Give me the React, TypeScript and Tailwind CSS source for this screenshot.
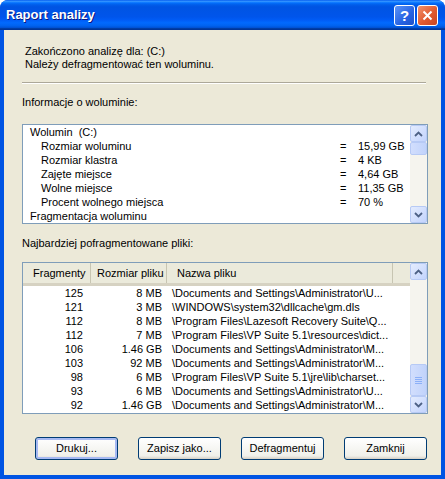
import React from 'react';

const volumeRows: { label: string; value?: string; indent?: boolean }[] = [
  { label: 'Wolumin\u00a0\u00a0(C:)' },
  { label: 'Rozmiar woluminu', value: '15,99 GB', indent: true },
  { label: 'Rozmiar klastra', value: '4 KB', indent: true },
  { label: 'Zajęte miejsce', value: '4,64 GB', indent: true },
  { label: 'Wolne miejsce', value: '11,35 GB', indent: true },
  { label: 'Procent wolnego miejsca', value: '70 %', indent: true },
  { label: 'Fragmentacja woluminu' },
];

const files = [
  ['125', '8 MB', '\\Documents and Settings\\Administrator\\U...'],
  ['121', '3 MB', '\\WINDOWS\\system32\\dllcache\\gm.dls'],
  ['112', '8 MB', '\\Program Files\\Lazesoft Recovery Suite\\Q...'],
  ['112', '7 MB', '\\Program Files\\VP Suite 5.1\\resources\\dict...'],
  ['106', '1.46 GB', '\\Documents and Settings\\Administrator\\M...'],
  ['103', '92 MB', '\\Documents and Settings\\Administrator\\M...'],
  ['98', '6 MB', '\\Program Files\\VP Suite 5.1\\jre\\lib\\charset...'],
  ['93', '6 MB', '\\Documents and Settings\\Administrator\\U...'],
  ['92', '1.46 GB', '\\Documents and Settings\\Administrator\\M...'],
];

function Arrow({ up }: { up?: boolean }) {
  return (
    <svg width="9" height="6" viewBox="0 0 9 6">
      <path
        d={up ? 'M1 5 L4.5 1.5 L8 5' : 'M1 1 L4.5 4.5 L8 1'}
        stroke="#4D6185"
        strokeWidth="1.8"
        fill="none"
      />
    </svg>
  );
}

function ScrollBtn({ up }: { up?: boolean }) {
  return (
    <div className="h-[17px] w-[17px] shrink-0 rounded-[2px] border border-[#B7CAF5] bg-[linear-gradient(135deg,#E4ECFE,#C3D4FD)] flex items-center justify-center">
      <Arrow up={up} />
    </div>
  );
}

function Thumb({ h, grip }: { h: number; grip?: boolean }) {
  return (
    <div
      className="w-[17px] shrink-0 rounded-[2px] border border-[#B7CAF5] bg-[linear-gradient(90deg,#D2DEFD,#C1D3FB)] flex flex-col items-center justify-center gap-[1px]"
      style={{ height: h }}
    >
      {grip &&
        [0, 1, 2, 3].map((i) => (
          <div key={i} className="h-[1px] w-[7px] bg-[#EEF3FE] border-b border-[#8CB0F8]" />
        ))}
    </div>
  );
}

export default function App() {
  return (
    <div className="w-[445px] h-[479px] bg-white font-['Liberation_Sans',Arial,sans-serif] text-[11px] text-black">
      <div className="w-[445px] h-[479px] rounded-t-[8px] overflow-hidden bg-[#0054E3] flex flex-col">
        {/* title bar */}
        <div className="h-[30px] shrink-0 flex items-center pl-[6px] pr-[7px] bg-[linear-gradient(180deg,#0058EE_0%,#3593FF_4%,#288EFF_6%,#127DFF_8%,#036FFC_10%,#0262EE_14%,#0057E5_20%,#0054E3_24%,#0055EB_56%,#005BF5_66%,#026AFE_76%,#0062EF_86%,#0052D6_92%,#0040AB_94%,#003092_100%)]">
          <span className="flex-1 text-white font-bold text-[13px] [text-shadow:1px_1px_#0A1883]">
            Raport analizy
          </span>
          <div className="flex gap-[2px] mt-[1px]">
            <div className="h-[21px] w-[21px] rounded-[3px] border border-white bg-[linear-gradient(135deg,#5C93F7,#2663E3_60%,#1E50C8)] flex items-center justify-center text-white font-bold text-[15px] leading-none">
              ?
            </div>
            <div className="h-[21px] w-[21px] rounded-[3px] border border-white bg-[linear-gradient(135deg,#F1926C,#E15A30_55%,#C84522)] flex items-center justify-center">
              <svg width="11" height="11" viewBox="0 0 11 11">
                <path d="M1.5 1.5 L9.5 9.5 M9.5 1.5 L1.5 9.5" stroke="white" strokeWidth="2" />
              </svg>
            </div>
          </div>
        </div>

        {/* client */}
        <div className="flex-1 mx-[4px] mb-[4px] bg-[#ECE9D8] pt-[15px] pb-[15px] flex flex-col leading-[13px]">
          <div className="pl-[21px]">
            <div>Zakończono analizę dla: (C:)</div>
            <div>Należy defragmentować ten woluminu.</div>
          </div>
          <div className="mt-[11px] ml-[18px] w-[404px] h-[2px] border-t border-[#ACA899] border-b border-b-white" />
          <div className="mt-[12px] pl-[18px]">Informacje o woluminie:</div>

          {/* volume box */}
          <div className="mt-[15px] ml-[18px] w-[406px] h-[100px] border border-[#7F9DB9] bg-white flex">
            <div className="flex-1 flex flex-col">
              {volumeRows.map((r) => (
                <div key={r.label} className="h-[14px] flex items-center whitespace-nowrap">
                  <span className={r.indent ? 'pl-[18px] w-[317px]' : 'pl-[7px] w-[317px]'}>{r.label}</span>
                  {r.value && (
                    <>
                      <span className="w-[18px]">=</span>
                      <span>{r.value}</span>
                    </>
                  )}
                </div>
              ))}
            </div>
            <div className="w-[17px] bg-[#F5F4EE] flex flex-col">
              <ScrollBtn up />
              <Thumb h={13} />
              <div className="flex-1" />
              <ScrollBtn />
            </div>
          </div>

          <div className="mt-[13px] pl-[18px]">Najbardziej pofragmentowane pliki:</div>

          {/* files box */}
          <div className="mt-[12px] ml-[18px] w-[406px] h-[152px] border border-[#7F9DB9] bg-white flex">
            <div className="flex-1 flex flex-col min-w-0">
              <div className="h-[23px] shrink-0 flex bg-[#EBEADB] border-b-[3px] border-[#D6D2C2] whitespace-nowrap">
                <div className="w-[68px] shrink-0 pl-[10px] flex items-center border-r border-[#C7C5B2]">Fragmenty</div>
                <div className="w-[76px] shrink-0 pl-[6px] flex items-center overflow-hidden border-r border-[#C7C5B2]">Rozmiar pliku</div>
                <div className="w-[226px] shrink-0 pl-[10px] flex items-center border-r border-[#C7C5B2]">Nazwa pliku</div>
                <div className="flex-1" />
              </div>
              {files.map((f, i) => (
                <div key={i} className="h-[14px] flex items-center whitespace-nowrap">
                  <span className="w-[68px] shrink-0 pr-[8px] text-right">{f[0]}</span>
                  <span className="w-[76px] shrink-0 pr-[5px] text-right">{f[1]}</span>
                  <span className="pl-[5px] overflow-hidden">{f[2]}</span>
                </div>
              ))}
            </div>
            <div className="w-[17px] bg-[#F5F4EE] flex flex-col">
              <ScrollBtn up />
              <div className="flex-1" />
              <Thumb h={32} grip />
              <ScrollBtn />
            </div>
          </div>

          {/* buttons */}
          <div className="mt-[23px] pl-[31px] flex gap-[20px]">
            {['Drukuj...', 'Zapisz jako...', 'Defragmentuj', 'Zamknij'].map((b, i) => (
              <div
                key={b}
                className={
                  'w-[83px] h-[23px] rounded-[3px] border border-[#003C74] bg-[linear-gradient(180deg,#FFFFFF,#F0F0EA_85%,#D6D0C5)] flex items-center justify-center ' +
                  (i === 0 ? 'shadow-[inset_0_0_0_2px_#A6B9F2]' : '')
                }
              >
                {b}
              </div>
            ))}
          </div>
        </div>
      </div>
    </div>
  );
}
